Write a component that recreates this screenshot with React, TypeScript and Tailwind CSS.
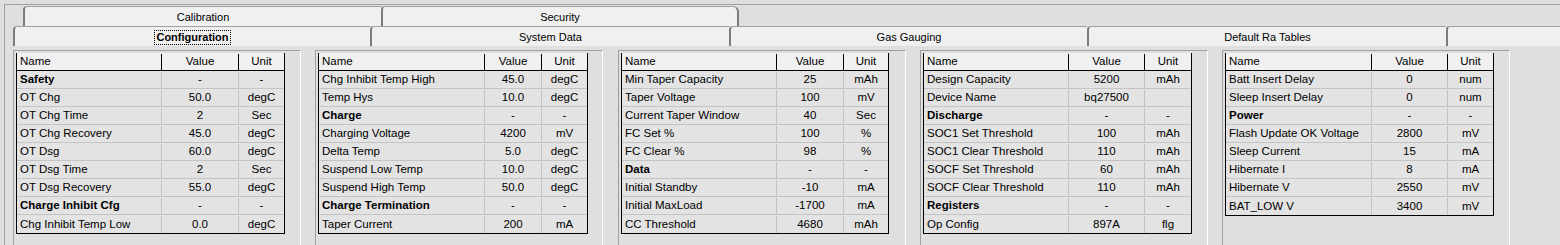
import React from "react";

type Row = [string, string, string];

interface PanelDef {
  cols: [string, string, string];
  rows: Row[];
}

const panels: PanelDef[] = [
  {
    cols: ["w-[145px]", "w-[77px]", "w-[45px]"],
    rows: [
      ["Safety", "-", "-"],
      ["OT Chg", "50.0", "degC"],
      ["OT Chg Time", "2", "Sec"],
      ["OT Chg Recovery", "45.0", "degC"],
      ["OT Dsg", "60.0", "degC"],
      ["OT Dsg Time", "2", "Sec"],
      ["OT Dsg Recovery", "55.0", "degC"],
      ["Charge Inhibit Cfg", "-", "-"],
      ["Chg Inhibit Temp Low", "0.0", "degC"],
    ],
  },
  {
    cols: ["w-[166px]", "w-[57px]", "w-[45px]"],
    rows: [
      ["Chg Inhibit Temp High", "45.0", "degC"],
      ["Temp Hys", "10.0", "degC"],
      ["Charge", "-", "-"],
      ["Charging Voltage", "4200", "mV"],
      ["Delta Temp", "5.0", "degC"],
      ["Suspend Low Temp", "10.0", "degC"],
      ["Suspend High Temp", "50.0", "degC"],
      ["Charge Termination", "-", "-"],
      ["Taper Current", "200", "mA"],
    ],
  },
  {
    cols: ["w-[155px]", "w-[67px]", "w-[44px]"],
    rows: [
      ["Min Taper Capacity", "25", "mAh"],
      ["Taper Voltage", "100", "mV"],
      ["Current Taper Window", "40", "Sec"],
      ["FC Set %", "100", "%"],
      ["FC Clear %", "98", "%"],
      ["Data", "-", "-"],
      ["Initial Standby", "-10", "mA"],
      ["Initial MaxLoad", "-1700", "mA"],
      ["CC Threshold", "4680", "mAh"],
    ],
  },
  {
    cols: ["w-[145px]", "w-[76px]", "w-[46px]"],
    rows: [
      ["Design Capacity", "5200", "mAh"],
      ["Device Name", "bq27500", ""],
      ["Discharge", "-", "-"],
      ["SOC1 Set Threshold", "100", "mAh"],
      ["SOC1 Clear Threshold", "110", "mAh"],
      ["SOCF Set Threshold", "60", "mAh"],
      ["SOCF Clear Threshold", "110", "mAh"],
      ["Registers", "-", "-"],
      ["Op Config", "897A", "flg"],
    ],
  },
  {
    cols: ["w-[146px]", "w-[76px]", "w-[45px]"],
    rows: [
      ["Batt Insert Delay", "0", "num"],
      ["Sleep Insert Delay", "0", "num"],
      ["Power", "-", "-"],
      ["Flash Update OK Voltage", "2800", "mV"],
      ["Sleep Current", "15", "mA"],
      ["Hibernate I", "8", "mA"],
      ["Hibernate V", "2550", "mV"],
      ["BAT_LOW V", "3400", "mV"],
    ],
  },
];

function Tab({
  label,
  width,
  selected,
  last,
}: {
  label: string;
  width: string;
  selected?: boolean;
  last?: boolean;
}) {
  return (
    <div
      className={`${width} h-full flex items-center justify-center pt-px bg-[#f0f0f0] border-t border-t-[#a0a0a0] border-l-2 border-l-[#7c7c7c] rounded-tl-[4px] ${
        last ? "border-r-2 border-r-[#7c7c7c] rounded-tr-[6px]" : ""
      }`}
    >
      {selected ? (
        <span className="font-bold border border-dotted border-black px-px leading-[13px]">
          {label}
        </span>
      ) : (
        <span>{label}</span>
      )}
    </div>
  );
}

function DataTable({ cols, rows }: PanelDef) {
  return (
    <div className="w-fit border-l border-r border-b border-black bg-[#e3e3e3]">
      <div className="flex h-[18px] pt-px bg-[#f0f0f0] border-b border-black">
        <div className={`${cols[0]} border-r border-black pl-[3px] flex items-center`}>Name</div>
        <div className={`${cols[1]} border-r border-black flex items-center justify-center`}>
          Value
        </div>
        <div className={`${cols[2]} flex items-center justify-center`}>Unit</div>
      </div>
      {rows.map(([name, value, unit]) => {
        const group = value === "-";
        return (
          <div key={name} className="flex h-[18px] pt-px border-b border-[#c4c4c4] last:border-b-0">
            <div
              className={`${cols[0]} border-r border-[#c4c4c4] pl-[3px] flex items-center whitespace-nowrap ${
                group ? "font-bold" : ""
              }`}
            >
              {name}
            </div>
            <div className={`${cols[1]} border-r border-[#c4c4c4] flex items-center justify-center`}>
              {value}
            </div>
            <div className={`${cols[2]} flex items-center justify-center`}>{unit}</div>
          </div>
        );
      })}
    </div>
  );
}

export default function App() {
  return (
    <div className="w-[1560px] h-[245px] overflow-hidden bg-[#dfdfdf] pt-[4px] pl-[4px] text-black font-['Liberation_Sans',Arial,sans-serif]">
      <div className="h-full border-t border-l border-[#a0a0a0]">
        <div className="mt-px ml-[18px] flex h-[20px] text-[11px]">
          <Tab label="Calibration" width="w-[358px]" />
          <Tab label="Security" width="w-[358px]" last />
        </div>
        <div className="ml-[8px] flex h-[20px] text-[11px]">
          <Tab label="Configuration" width="w-[357px]" selected />
          <Tab label="System Data" width="w-[359px]" />
          <Tab label="Gas Gauging" width="w-[358px]" />
          <Tab label="Default Ra Tables" width="w-[359px]" />
          <Tab label="" width="flex-1" />
        </div>
        <div className="mt-[4px] ml-[8px] flex text-[11.5px]">
          {panels.map((p, i) => (
            <div
              key={i}
              className={`w-[288px] h-[200px] shrink-0 border border-t-[#a0a0a0] border-l-[#a0a0a0] border-r-white border-b-white p-[2px] ${
                i === 0 ? "" : i === 2 ? "ml-[15px]" : "ml-[14px]"
              }`}
            >
              <DataTable cols={p.cols} rows={p.rows} />
            </div>
          ))}
        </div>
      </div>
    </div>
  );
}
